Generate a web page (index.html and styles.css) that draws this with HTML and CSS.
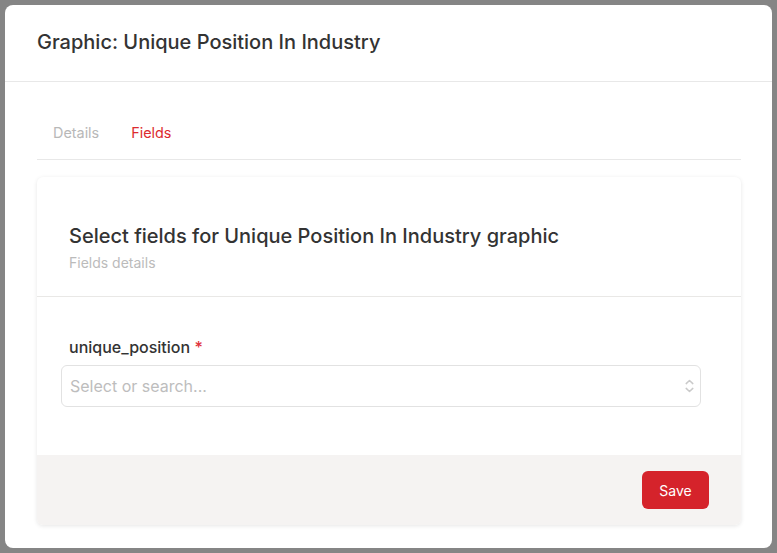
FILE: index.html
```html
<!DOCTYPE html>
<html>
<head>
<meta charset="utf-8">
<link rel="stylesheet" href="styles.css">
</head>
<body>
<div class="modal">
  <div class="modal-header">
    <h1 class="modal-title">Graphic: Unique Position In Industry</h1>
  </div>
  <div class="modal-body">
    <div class="tabs">
      <div class="tab">Details</div>
      <div class="tab active">Fields</div>
    </div>
    <div class="card">
      <div class="card-header">
        <h2 class="card-title">Select fields for Unique Position In Industry graphic</h2>
        <div class="card-subtitle">Fields details</div>
      </div>
      <div class="card-content">
        <label class="field-label">unique_position <span class="req">*</span></label>
        <div class="select">
          <span class="placeholder">Select or search...</span>
          <svg class="chev" width="9" height="14" viewBox="0 0 9 14" fill="none" stroke="#cacaca" stroke-width="1.5" stroke-linecap="round" stroke-linejoin="round">
            <path d="M1.2 4.6 L4.5 1.5 L7.8 4.6"/>
            <path d="M1.2 9.4 L4.5 12.5 L7.8 9.4"/>
          </svg>
        </div>
      </div>
      <div class="card-footer">
        <button class="btn-save">Save</button>
      </div>
    </div>
  </div>
</div>
</body>
</html>
```

FILE: styles.css
```css
* { box-sizing: border-box; }
html, body { margin: 0; padding: 0; }
body {
  background: #858585;
  font-family: Inter, "Noto Sans", sans-serif;
  width: 777px;
  height: 553px;
  overflow: hidden;
  padding: 5px 0 0 5px;
}
.modal {
  width: 767px;
  height: 543px;
  background: #fff;
  border-radius: 8px;
  overflow: hidden;
}
.modal-header {
  height: 77px;
  border-bottom: 1px solid #e8e8e8;
  display: flex;
  align-items: center;
  padding: 0 32px 2px;
}
.modal-title {
  margin: 0;
  font-size: 20px;
  font-weight: 500;
  color: #333;
  line-height: 28px;
}
.modal-body {
  padding: 0 31px 0 32px;
}
.tabs {
  display: flex;
  padding-top: 41px;
  padding-bottom: 16px;
  border-bottom: 1px solid #e8e8e8;
}
.tab {
  padding: 0 16px;
  font-size: 14.4px;
  line-height: 20px;
  color: #b8b8b8;
}
.tab.active { color: #dc2b2f; }
.card {
  margin-top: 17px;
  background: #fff;
  border-radius: 6px;
  box-shadow: 0 1px 4px rgba(0,0,0,0.1);
  overflow: hidden;
}
.card-header {
  padding: 45px 32px 23px;
  border-bottom: 1px solid #e9e8e6;
}
.card-title {
  margin: 0;
  font-size: 20px;
  font-weight: 500;
  color: #333;
  line-height: 28px;
}
.card-subtitle {
  margin-top: 3px;
  font-size: 14px;
  line-height: 20px;
  color: #bbb;
}
.card-content {
  padding: 38px 24px 48px;
}
.field-label {
  display: block;
  padding-left: 8px;
  font-size: 16px;
  font-weight: 500;
  line-height: 24px;
  color: #333;
  margin-bottom: 6px;
}
.req { color: #e0313a; }
.select {
  width: 640px;
  height: 42px;
  border: 1px solid #e2e2e2;
  border-radius: 6px;
  display: flex;
  align-items: center;
  justify-content: space-between;
  padding: 0 6px 0 8px;
}
.placeholder {
  font-size: 16px;
  color: #bdbdbd;
}
.chev { display: block; }
.card-footer {
  height: 70px;
  background: #f5f3f2;
  display: flex;
  align-items: center;
  justify-content: flex-end;
  padding: 0 32px;
}
.btn-save {
  width: 67px;
  height: 38px;
  background: #d5232b;
  color: #fff;
  border: none;
  border-radius: 6px;
  font-family: Inter, "Noto Sans", sans-serif;
  font-size: 14px;
  font-weight: 400;
}
```
